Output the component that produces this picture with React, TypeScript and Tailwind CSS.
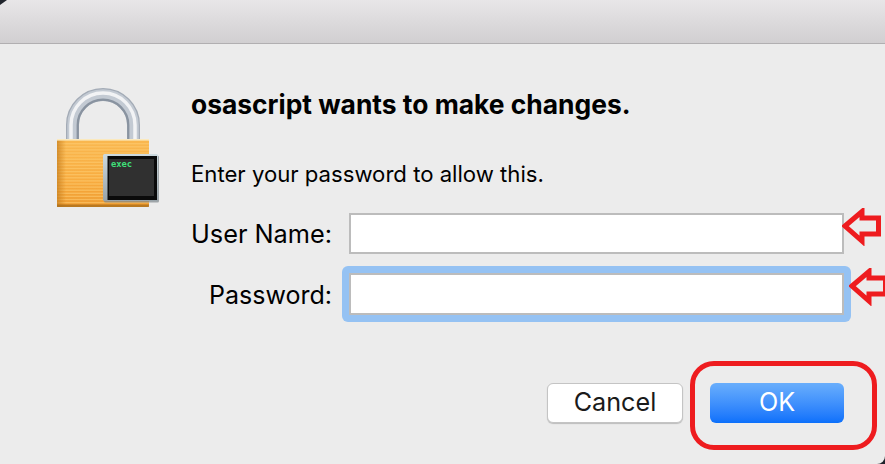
import React from "react";

function LockIcon() {
  return (
    <svg width="110" height="124" viewBox="0 0 110 124" className="block overflow-visible">
      <defs>
        <linearGradient id="body" x1="0" x2="0" y1="0" y2="1">
          <stop offset="0" stopColor="#f9b850" />
          <stop offset="0.6" stopColor="#f8ac40" />
          <stop offset="1" stopColor="#ee9a2e" />
        </linearGradient>
        <linearGradient id="edge" x1="0" x2="1" y1="0" y2="0">
          <stop offset="0" stopColor="#c77f1f" stopOpacity="0.75" />
          <stop offset="1" stopColor="#c77f1f" stopOpacity="0" />
        </linearGradient>
        <linearGradient id="frame" x1="0" x2="0" y1="0" y2="1">
          <stop offset="0" stopColor="#cddadf" />
          <stop offset="1" stopColor="#98a3a9" />
        </linearGradient>
      </defs>
      {/* shackle */}
      <path d="M16.5 55 V39 A30.5 30.5 0 0 1 77.5 39 V55" fill="none" stroke="#a3abb6" strokeWidth="13" />
      <path d="M16.5 55 V39 A30.5 30.5 0 0 1 77.5 39 V55" fill="none" stroke="#c3cad3" strokeWidth="10.5" />
      <path d="M15 55 V39 A32 32 0 0 1 79 39 V55" fill="none" stroke="#f2f3f5" strokeWidth="3.5" />
      <path d="M21.7 55 V39 A25.3 25.3 0 0 1 72.3 39 V55" fill="none" stroke="#8993a0" strokeWidth="2.2" />
      {/* body */}
      <rect x="1" y="53" width="92" height="68" rx="2" fill="url(#body)" />
      {Array.from({ length: 20 }).map((_, i) => (
        <rect key={i} x="1" y={57 + i * 3.1} width="92" height="1.4" fill="#fdcb72" opacity="0.6" />
      ))}
      <rect x="1" y="53" width="9" height="68" fill="url(#edge)" />
      <rect x="1" y="53" width="92" height="1.6" fill="#fbe9bd" />
      <rect x="1" y="118.5" width="92" height="2.5" fill="#a86d1c" opacity="0.75" />
      {/* terminal */}
      <rect x="48" y="69.5" width="55" height="47" rx="1.5" fill="#7f878c" opacity="0.7" />
      <rect x="47" y="68" width="55" height="47" rx="1.5" fill="url(#frame)" />
      <rect x="51.5" y="70" width="49.5" height="44" fill="#0a0a0a" />
      <rect x="53" y="73" width="45" height="37" fill="#303030" />
      <text x="55" y="81" fontFamily="'DejaVu Sans Mono', monospace" fontSize="8.75" fontWeight="700" fill="#3fe07a">
        exec
      </text>
    </svg>
  );
}

function Arrow({ className }: { className: string }) {
  return (
    <svg width="40" height="38" viewBox="0 0 40 38" className={className}>
      <path d="M3 18 L20 3.5 V10 H36.5 V26 H20 V33 Z" fill="none" stroke="#ee1c1f" strokeWidth="5" />
    </svg>
  );
}

export default function App() {
  return (
    <div
      className="relative w-[885px] h-[464px] overflow-hidden bg-[#ececec] text-black"
      style={{ fontFamily: "Inter, 'Liberation Sans', sans-serif" }}
    >
      <div className="h-[44px] border-b border-[#b1afb1] bg-gradient-to-b from-[#e8e6e8] to-[#d1cfd1] rounded-tl-[6px]" />
      <div className="flex pl-[56px] pt-[42px]">
        <div className="w-[135px] shrink-0">
          <LockIcon />
        </div>
        <div className="w-[660px]">
          <h1 className="text-[26.4px] leading-[38px] font-bold -mt-[1px]">osascript wants to make changes.</h1>
          <p className="mt-[36px] text-[22.15px] leading-[30px]">Enter your password to allow this.</p>
          <div className="mt-[24px] flex items-center">
            <label className="w-[141px] shrink-0 whitespace-nowrap pt-[1px] flex justify-end text-[25.3px] leading-[30px]">User Name:</label>
            <div className="ml-[17px] w-[495px] h-[41px] bg-white border-2 border-[#bcbcbc]" />
          </div>
          <div className="mt-[19px] flex items-center">
            <label className="w-[141px] shrink-0 whitespace-nowrap pt-[1px] text-right text-[25px] leading-[30px]">Password:</label>
            <div className="ml-[10px] -my-[7px] w-[509px] h-[56px] p-[7px] rounded-[6px] bg-[#95c2f3]">
              <div className="w-full h-full bg-white border-2 border-[#bcbcbc]" />
            </div>
          </div>
          <div className="mt-[68px] flex gap-[27px] pl-[356px]">
            <button className="w-[136px] h-[40px] rounded-[6px] bg-white border border-[#c4c4c4] shadow-[0_1px_1px_rgba(0,0,0,0.2)] text-[25.2px] text-[#1a1a1a]">
              Cancel
            </button>
            <button className="w-[134px] h-[40px] rounded-[6px] bg-gradient-to-b from-[#69aefc] to-[#0a70fb] text-white text-[25.2px]">
              OK
            </button>
          </div>
        </div>
      </div>
      <Arrow className="absolute left-[842px] top-[208px]" />
      <Arrow className="absolute left-[849px] top-[268px]" />
      <div className="absolute left-[690px] top-[361px] w-[187px] h-[89px] rounded-[24px] border-[5px] border-[#ee1c1f]" />
      <div className="absolute right-0 bottom-0 w-[10px] h-[10px] bg-[#20242c]">
        <div className="w-full h-full bg-[#ececec] rounded-br-[8px]" />
      </div>
      <div className="absolute left-0 top-0 w-[7px] h-[5px] bg-[#20242c]" style={{ clipPath: "polygon(0 0,100% 0,0 100%)" }} />
    </div>
  );
}
